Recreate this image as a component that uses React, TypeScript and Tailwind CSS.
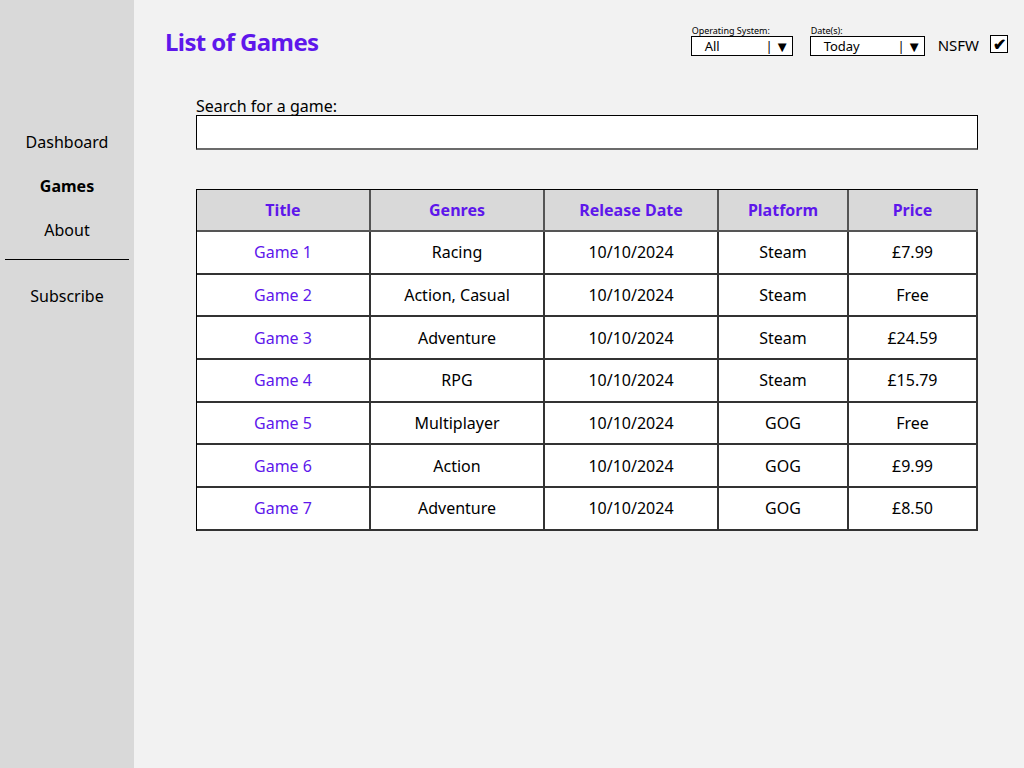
import React from "react";

const games = [
  { title: "Game 1", genres: "Racing", date: "10/10/2024", platform: "Steam", price: "£7.99" },
  { title: "Game 2", genres: "Action, Casual", date: "10/10/2024", platform: "Steam", price: "Free" },
  { title: "Game 3", genres: "Adventure", date: "10/10/2024", platform: "Steam", price: "£24.59" },
  { title: "Game 4", genres: "RPG", date: "10/10/2024", platform: "Steam", price: "£15.79" },
  { title: "Game 5", genres: "Multiplayer", date: "10/10/2024", platform: "GOG", price: "Free" },
  { title: "Game 6", genres: "Action", date: "10/10/2024", platform: "GOG", price: "£9.99" },
  { title: "Game 7", genres: "Adventure", date: "10/10/2024", platform: "GOG", price: "£8.50" },
];

const headers = ["Title", "Genres", "Release Date", "Platform", "Price"];

function Select({ label, value, width }: { label: string; value: string; width: string }) {
  return (
    <div className={`flex flex-col ${width}`}>
      <span className="text-[9px] leading-[10px] text-black pl-[1px]">{label}</span>
      <div className="flex items-center justify-between h-[20px] border border-black bg-white pl-[13px] pr-[2px] text-[13px] leading-none">
        <span>{value}</span>
        <span className="flex items-center gap-[2px]">
          <span className="text-[13px] text-black">|</span>
          <span className="text-[15px]">▼</span>
        </span>
      </div>
    </div>
  );
}

export default function App() {
  return (
    <div className="flex w-[1024px] h-[768px] bg-[#f2f2f2] text-black font-['Noto_Sans',sans-serif]">
      {/* sidebar */}
      <aside className="w-[134px] shrink-0 bg-[#d9d9d9] flex flex-col items-center pt-[130px] text-[16px]">
        <a className="h-[44px] leading-[24px]">Dashboard</a>
        <a className="h-[44px] leading-[24px] font-bold">Games</a>
        <a className="h-[24px] leading-[24px]">About</a>
        <div className="w-[124px] border-b border-black mt-[17px] mb-[24px]" />
        <a className="leading-[24px]">Subscribe</a>
      </aside>

      {/* main */}
      <main className="flex-1 flex flex-col">
        <header className="flex items-start justify-between pl-[31px] pr-[17px] pt-[26px]">
          <h1 className="text-[24px] font-bold text-[#5e17eb] leading-[32px] tracking-tight">List of Games</h1>
          <div className="flex items-end">
            <Select label="Operating System:" value="All" width="w-[102px]" />
            <div className="w-[17px]" />
            <Select label="Date(s):" value="Today" width="w-[115px]" />
            <span className="ml-[13px] text-[15px] leading-[20px] pb-[1px]">NSFW</span>
            <div className="ml-[11px] mb-[3px] w-[18px] h-[18px] border border-black bg-white flex items-center justify-center text-[16px] font-bold leading-none">
              ✔
            </div>
          </div>
        </header>

        <section className="pl-[62px] pr-[47px] mt-[39px]">
          <label className="block text-[16px] leading-[18px]">Search for a game:</label>
          <div className="h-[35px] bg-white border border-black border-b-[#6b6b6b] border-b-2" />
        </section>

        <section className="pl-[62px] pr-[47px] mt-[39px]">
          <div className="grid grid-cols-[174px_174px_174px_130px_129px] border-l border-t border-black">
            {headers.map((h) => (
              <div
                key={h}
                className="h-[42px] bg-[#d9d9d9] flex items-center justify-center font-bold text-[#5e17eb] text-[16px] border-r-2 border-b-2 border-[#555]"
              >
                {h}
              </div>
            ))}
            {games.map((g) => (
              <React.Fragment key={g.title}>
                <div className="h-[42.7px] bg-white flex items-center justify-center text-[#5e17eb] text-[16px] border-r-2 border-b-2 border-[#333]">
                  {g.title}
                </div>
                <div className="h-[42.7px] bg-white flex items-center justify-center text-[16px] border-r-2 border-b-2 border-[#333]">
                  {g.genres}
                </div>
                <div className="h-[42.7px] bg-white flex items-center justify-center text-[16px] border-r-2 border-b-2 border-[#333]">
                  {g.date}
                </div>
                <div className="h-[42.7px] bg-white flex items-center justify-center text-[16px] border-r-2 border-b-2 border-[#333]">
                  {g.platform}
                </div>
                <div className="h-[42.7px] bg-white flex items-center justify-center text-[16px] border-r-2 border-b-2 border-[#333]">
                  {g.price}
                </div>
              </React.Fragment>
            ))}
          </div>
        </section>
      </main>
    </div>
  );
}
